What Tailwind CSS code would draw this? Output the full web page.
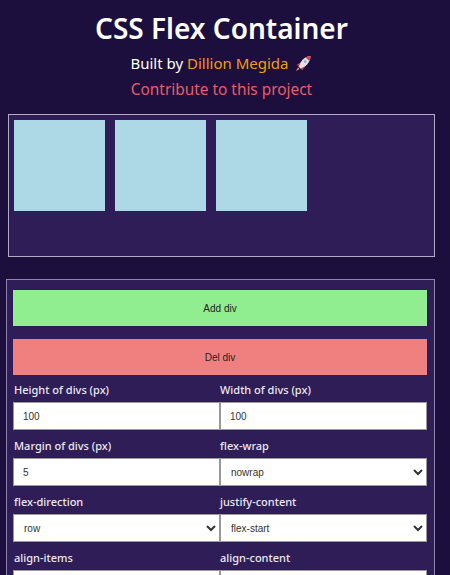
<!DOCTYPE html>
<html lang="en">
<head>
  <meta charset="UTF-8" />
  <meta name="viewport" content="width=device-width, initial-scale=1.0"/>
  <title>CSS Flex Container</title>
  <script src="https://cdn.jsdelivr.net/npm/@tailwindcss/browser@4"></script>
</head>
<body class="h-[575px] overflow-hidden bg-[#1c0f3e] font-['Noto_Sans',sans-serif] text-white">

  <!-- Header -->
  <header class="w-[443px] pt-[10px] text-center">
    <h1 class="h-[36px] text-[28px] leading-[36px] font-semibold">CSS Flex Container</h1>
    <p class="mt-[7px] flex h-[20px] items-center justify-center gap-[6px] pr-[2px] text-[15px] leading-[20px]">
      <span>Built by <a href="#" class="text-[#f29d0c]">Dillion Megida</a></span>
      <svg width="16" height="17" viewBox="0 0 16 17">
        <path d="M15.5 1 C11.5 1.2 8 3.5 5.5 7.5 L3.5 11.5 L6 14 L10 11.5 C13.5 8.5 15.5 5 15.5 1 Z" fill="#e8dfe3"/>
        <path d="M15.5 1 C13.6 1.1 12 1.7 10.6 2.6 L14.2 6 C15 4.6 15.5 2.9 15.5 1 Z" fill="#d9434e"/>
        <circle cx="10.2" cy="6.6" r="1.4" fill="#7fb5d8"/>
        <path d="M5.5 7.5 L1.5 10 L3.8 11 Z M10 11.5 L7 15.5 L6 13.2 Z" fill="#d9434e"/>
        <path d="M3 12.5 L1 16 L4.5 14 Z" fill="#f0a35a"/>
      </svg>
    </p>
    <a href="#" class="mt-[7px] block h-[20px] text-[15.4px] leading-[20px] text-[#e85d68]">Contribute to this project</a>
  </header>

  <!-- Preview -->
  <section class="mt-[14px] ml-[8px] flex h-[143px] w-[427px] border border-[#b3abc6] bg-[#2f1d58]">
    <div class="mt-[5px] ml-[5px] h-[91px] w-[91px] bg-[#add8e6]"></div>
    <div class="mt-[5px] ml-[10px] h-[91px] w-[91px] bg-[#add8e6]"></div>
    <div class="mt-[5px] ml-[10px] h-[91px] w-[91px] bg-[#add8e6]"></div>
  </section>

  <!-- Controls -->
  <section class="mt-[22px] ml-[6px] w-[429px] border border-[#8f85ab] bg-[#2f1d58] px-[6px] pt-[10px] pb-[10px]">
    <button class="block h-[36px] w-[414px] bg-[#90ee90] font-['Liberation_Sans',sans-serif] text-[10px] text-[#222]">Add div</button>
    <button class="mt-[13px] block h-[36px] w-[414px] bg-[#f08080] font-['Liberation_Sans',sans-serif] text-[10px] text-[#222]">Del div</button>

    <div class="mt-[7px] grid w-[414px] grid-cols-2 gap-y-[8px] text-[11px] leading-[16px] font-medium text-[#ece8f3]">
      <label class="block">
        <span class="block h-[20px] pl-px">Height of divs (px)</span>
        <input value="100" class="block h-[28px] w-full border border-[#999] bg-white px-[9px] font-['Liberation_Sans',sans-serif] text-[10px] font-normal text-[#333]"/>
      </label>
      <label class="block">
        <span class="block h-[20px]">Width of divs (px)</span>
        <input value="100" class="block h-[28px] w-full border border-[#999] bg-white px-[9px] font-['Liberation_Sans',sans-serif] text-[10px] font-normal text-[#333]"/>
      </label>
      <label class="block">
        <span class="block h-[20px] pl-px">Margin of divs (px)</span>
        <input value="5" class="block h-[28px] w-full border border-[#999] bg-white px-[9px] font-['Liberation_Sans',sans-serif] text-[10px] font-normal text-[#333]"/>
      </label>
      <label class="block">
        <span class="block h-[20px]">flex-wrap</span>
        <select class="block h-[28px] w-full border border-[#999] bg-white px-[6px] font-['Liberation_Sans',sans-serif] text-[10px] font-normal text-[#333]"><option>nowrap</option></select>
      </label>
      <label class="block">
        <span class="block h-[20px] pl-px">flex-direction</span>
        <select class="block h-[28px] w-full border border-[#999] bg-white px-[6px] font-['Liberation_Sans',sans-serif] text-[10px] font-normal text-[#333]"><option>row</option></select>
      </label>
      <label class="block">
        <span class="block h-[20px]">justify-content</span>
        <select class="block h-[28px] w-full border border-[#999] bg-white px-[6px] font-['Liberation_Sans',sans-serif] text-[10px] font-normal text-[#333]"><option>flex-start</option></select>
      </label>
      <label class="block">
        <span class="block h-[20px] pl-px">align-items</span>
        <select class="block h-[28px] w-full border border-[#999] bg-white px-[6px] font-['Liberation_Sans',sans-serif] text-[10px] font-normal text-[#333]"><option>flex-start</option></select>
      </label>
      <label class="block">
        <span class="block h-[20px]">align-content</span>
        <select class="block h-[28px] w-full border border-[#999] bg-white px-[6px] font-['Liberation_Sans',sans-serif] text-[10px] font-normal text-[#333]"><option>flex-start</option></select>
      </label>
    </div>
  </section>

</body>
</html>
